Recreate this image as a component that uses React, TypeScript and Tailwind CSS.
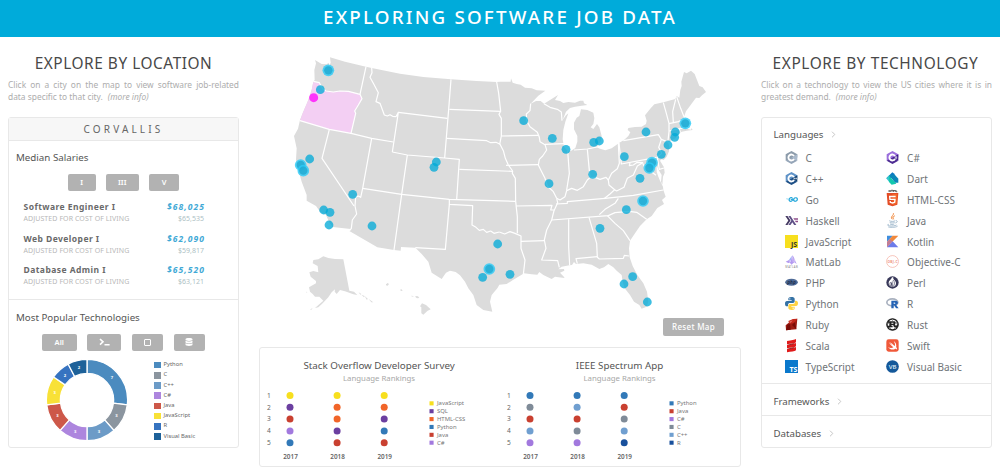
import React from "react";
import { SiHaskell, SiRust, SiGo } from "react-icons/si";
import { FaDatabase } from "react-icons/fa";

/* ---------- map data ---------- */

const shift = (dx: number, dy: number, pts: string) =>
  pts
    .trim()
    .split(/\s+/)
    .map((p) => {
      const [x, y] = p.split(",").map(Number);
      return `${x + dx},${y + dy}`;
    })
    .join(" ");

const COUNTRY = [
  shift(0, 0, "75,30 95,42 110,43 116,38 118,48 122,38 120,22 165,35 228,50 245,54 330,71 400,81 483,88 560,93 620,96"),
  shift(630, 0, "0,95 32,95 33,85 38,98 50,102 62,104 75,113 95,115 110,121 136,122 115,137 92,161 108,153 122,153 132,161 150,150 174,135 165,150 180,153 190,159 205,156 225,158 240,152 250,152 252,160 262,165 245,167 225,170 210,174 198,185 190,205 186,212 198,196 205,190 196,215 190,240 188,268 192,290 203,303 214,302 226,294 232,275 232,258 222,238 222,218 230,203 238,198 243,178 262,180 280,188 283,205 280,222 272,232 280,237 291,222 298,232 305,258 303,272 290,292 300,296 316,301 335,295 357,279 372,270 385,258 391,247 383,240 385,234 405,231 425,230 438,222 440,212 435,196 452,175 463,163 490,157 526,147 530,138 538,143 541,120 545,108 544,95 552,66 560,70 573,62 584,72 598,108 608,112 618,126 606,136 598,144 588,143 572,165 558,184 552,200 549,210 555,224 560,236 573,239 574,234 578,240 560,242 545,245 533,254 528,264 516,270 504,276 508,290 507,304 500,320 491,330 485,328 480,332 492,352 494,368 489,380 487,404 483,395 485,375 476,360 470,345 470,365 475,380 480,392 489,410"),
  shift(630, 390, "490,30 497,50 486,60 492,72 472,84 455,108 440,118 420,138 402,164 390,182 387,205 389,232 398,258 412,285 430,310 441,335 445,365 440,380 425,386 418,375 402,365 390,345 374,325 368,305 365,285 350,272 340,262 325,252 312,262 298,267 275,254 250,250 228,252 222,246 216,255 208,256 185,260 175,268 192,267 193,272 180,278 195,294 165,290 155,297 130,285 118,276 112,284 95,283 72,280 60,287 40,299 20,312 -2,314"),
  shift(0, 390, "622,325 605,345 600,365 607,395 580,390 560,375 550,345 535,325 525,305 510,286 497,276 480,272 468,278 455,297 425,278 415,245 395,222 376,203 333,201 332,212 312,210 262,202 178,153 182,147 128,141 117,125 108,105 90,95 78,78 50,62 50,45 35,5"),
  shift(0, 0, "33,388 22,350 18,330 20,295 12,258 24,236 30,210 38,190 55,150 65,120 70,95 74,90 73,60 78,40"),
].join(" ");

const OREGON = "70,96 88,98 98,116 108,123 130,126 150,123 175,124 190,128 210,133 216,146 205,165 194,183 197,190 183,250 118,238 30,212 38,190 55,150 65,120";

const BORDERS = [
  shift(0, 0, "70,94 88,98 98,116 108,123 130,126 150,123 175,124 190,128 210,133 216,146 205,165 194,183 197,190 183,250"),
  shift(0, 0, "228,50 210,133"),
  shift(0, 0, "30,212 118,238 183,250 245,265 310,276"),
  shift(0, 0, "118,238 96,325 192,468"),
  shift(0, 0, "245,265 218,415 212,442 205,438 197,442 195,468 200,492 187,510 184,535 178,543"),
  shift(0, 0, "218,415 335,433 478,448 675,454"),
  shift(0, 0, "307,306 352,315 464,324 508,328 500,449"),
  shift(0, 0, "352,315 335,433 312,600"),
  shift(0, 0, "245,54 246,68 240,82 250,100 265,128 258,155 270,160 283,195 292,198 300,194 308,199 318,200 325,187 307,306"),
  shift(0, 0, "325,187 472,205"),
  shift(0, 0, "483,88 476,178 464,324"),
  shift(0, 0, "478,178 632,184"),
  shift(0, 0, "470,265 590,272 602,278 618,277 630,283 640,302 646,325 655,345 668,363"),
  shift(0, 0, "508,358 668,364"),
  shift(0, 0, "620,96 626,130 632,184 627,193 634,205 634,258 629,283"),
  shift(0, 0, "634,258 745,256"),
  shift(0, 0, "648,346 744,344"),
  shift(0, 0, "668,363 667,370 676,385 677,454 682,500 682,550"),
  shift(0, 0, "478,448 478,463 548,467 546,525 558,532 568,541 580,538 590,547 602,543 612,550 628,546"),
  shift(630, 390, "-2,156 14,162 30,155 45,160 63,168 63,205 75,240 70,283"),
  shift(0, 0, "478,463 466,598 376,593"),
  shift(630, 0, "92,161 90,182 79,192 80,212 90,230 112,247 118,262 120,275 135,284 140,300 128,318 118,328 115,345 125,365 135,385 142,408 160,425 170,445"),
  shift(630, 390, "170,55 173,68 162,92 155,120 140,150 133,180 138,205 125,240 173,242 178,262"),
  shift(630, 0, "135,283 192,281"),
  shift(630, 0, "132,161 150,172 172,178 184,186 186,212"),
  shift(630, 0, "203,303 208,370 204,395 200,420"),
  shift(630, 0, "170,445 180,450 195,440 200,422 215,415 232,421 250,410 262,390 270,383 285,382 300,388 318,382 325,390 335,370 352,356 358,340 355,279"),
  shift(630, 0, "357,279 364,342 470,322"),
  shift(630, 0, "262,298 270,383"),
  shift(630, 0, "222,300 262,297 292,291"),
  shift(630, 0, "370,272 475,254 484,268 504,276"),
  shift(630, 0, "484,268 476,292 485,310 472,322 478,358 492,354"),
  shift(630, 0, "490,158 499,190 507,220 507,245 504,272"),
  shift(630, 0, "527,148 518,185 520,217"),
  shift(630, 0, "530,140 542,175 552,200"),
  shift(630, 0, "507,221 535,215 549,209"),
  shift(630, 0, "507,243 538,236 556,233"),
  shift(630, 0, "538,236 541,248"),
  shift(630, 0, "325,390 327,405 345,420 350,423 372,412 382,385 400,375 412,348 428,338 412,337 400,345 388,347 390,338"),
  shift(630, 0, "428,340 436,355 450,362 468,376"),
  shift(630, 0, "345,418 330,432 312,446"),
  shift(630, 390, "168,72 202,70 202,65 315,55 400,46 490,30"),
  shift(630, 390, "155,120 325,107 345,98 388,94 410,97 440,118"),
  shift(630, 390, "355,55 345,70 315,88 298,104"),
  shift(630, 390, "322,107 345,130 370,152 390,182"),
  shift(630, 390, "267,112 290,190 292,232 298,237 370,235 373,226 387,228"),
  shift(630, 390, "292,230 228,236 232,251"),
  shift(630, 390, "206,118 206,200 209,256"),
  shift(630, 390, "48,78 156,76 152,90 163,90"),
  shift(630, 390, "63,184 133,182"),
];

const ALASKA = "70,240 85,238 100,229 115,234 135,237 160,238 178,332 192,335 202,345 190,343 165,334 150,330 140,342 134,335 135,328 125,337 115,352 98,370 85,382 75,384 100,362 88,350 75,350 68,342 60,335 57,322 78,310 78,303 62,290 58,277 70,273 85,277 83,258 68,250";

const HUBS = [[115, 61], [32, 345], [40, 362], [598, 657], [1186, 220], [1086, 338], [1078, 354], [1059, 453]];
const CITIES = [
  [91, 119], [59, 327], [439, 336], [432, 352], [188, 433], [101, 480], [120, 487], [117, 525], [246, 528],
  [623, 582], [578, 682], [660, 673], [701, 212], [787, 265], [828, 298], [911, 277], [928, 273], [908, 373],
  [777, 401], [1003, 320], [1068, 246], [1156, 246], [1154, 262], [1134, 285], [1114, 313], [1050, 385],
  [1009, 479], [930, 535], [1028, 680], [1002, 702], [1072, 756],
];

function UsMap() {
  return (
    <svg viewBox="-153 -39 1566 930" className="block h-[310px] w-[522px]">
      <polygon points={COUNTRY} fill="#dcdcdc" />
      <polygon points={OREGON} fill="#f3cff3" />
      <g fill="none" stroke="#fff" strokeWidth="3.6" strokeLinejoin="round">
        {BORDERS.map((b, i) => (
          <polyline key={i} points={b} />
        ))}
      </g>
      <g transform="translate(0 390)" fill="#dcdcdc">
        <polygon points={ALASKA} />
        <path d="M206 337l8 5-3 2zM214 344l10 4-2 4zM224 348l10 9-4 2zM236 357l14 10-6 0zM60 388l8-3-4 4zM49 335l3 1-2 3z" />
        <path d="M288 313l5-4 4 3-4 5-5-1zM330 329l5-1 3 4-5 1zM364 347l6 1v2l-6-1zM376 348l8 1 4 5-7 1-4-3zM396 370l12 5 14 13-10 5-12 11-6-4 0-18-4-3z" />
      </g>
      {HUBS.map(([x, y]) => (
        <g key={`${x}-${y}`}>
          <circle cx={x} cy={y} r="17.5" fill="#2ccbf7" opacity=".82" />
          <circle cx={x} cy={y} r="12.5" fill="#1fa6cd" opacity=".75" />
        </g>
      ))}
      {CITIES.map(([x, y]) => (
        <circle key={`${x}-${y}`} cx={x} cy={y} r="13.2" fill="#00a9d8" opacity=".76" />
      ))}
      <circle cx="71" cy="143" r="13.5" fill="#fd34fb" />
    </svg>
  );
}

/* ---------- left column ---------- */

const SLICES: [string, number, string][] = [
  ["Python", 7, "#4b8bbf"],
  ["C", 3, "#8b959f"],
  ["C++", 3, "#6c9bc7"],
  ["C#", 3, "#ad86de"],
  ["Java", 3, "#cd5849"],
  ["JavaScript", 3, "#f8e137"],
  ["R", 2, "#3673c0"],
  ["Visual Basic", 2, "#1d6199"],
];

function Donut() {
  const total = 26;
  let acc = 0;
  const pt = (r: number, a: number) => `${(r * Math.sin(a)).toFixed(2)} ${(-r * Math.cos(a)).toFixed(2)}`;
  return (
    <svg viewBox="-41 -41 82 82" className="block size-[82px] shrink-0">
      {SLICES.map(([name, n, color]) => {
        const a0 = (acc / total) * 2 * Math.PI;
        acc += n;
        const a1 = (acc / total) * 2 * Math.PI;
        const m = (a0 + a1) / 2;
        return (
          <g key={name}>
            <path
              d={`M${pt(40.6, a0)}A40.6 40.6 0 0 1 ${pt(40.6, a1)}L${pt(26.6, a1)}A26.6 26.6 0 0 0 ${pt(26.6, a0)}Z`}
              fill={color}
              stroke="#fff"
              strokeWidth="1.3"
            />
            <text x={33.4 * Math.sin(m)} y={-33.4 * Math.cos(m) + 1.5} textAnchor="middle" fill="#fff" fontSize="4.2" fontWeight="700">
              {n}
            </text>
          </g>
        );
      })}
    </svg>
  );
}

const SALARIES = [
  ["Software Engineer I", "$68,025", "$65,535"],
  ["Web Developer I", "$62,090", "$59,817"],
  ["Database Admin I", "$65,520", "$63,121"],
];

const BTN = "flex items-center justify-center rounded-[2px] bg-[#b2b2b2] font-semibold text-white";

function LocationPanel() {
  return (
    <section className="w-[231px] shrink-0">
      <h2 className="mt-[17.6px] h-[18px] text-center text-[15.4px] leading-[18px] tracking-[0.55px] whitespace-nowrap text-[#484848]">EXPLORE BY LOCATION</h2>
      <div className="mt-[6.9px] text-[8.4px] leading-[11.6px] text-[#adadad]">
        <p className="text-justify [text-align-last:justify]">Click on a city on the map to view software job-related</p>
        <p className="flex gap-[5px]">
          <span>data specific to that city.</span>
          <i>(more info)</i>
        </p>
      </div>
      <div className="mt-[14px] h-[331.5px] rounded-[3px] border border-[#e8e8e8]">
        <h3 className="flex h-[23px] items-center justify-center border-b border-[#e8e8e8] bg-[#f7f7f7] pt-[2px] text-[10px] tracking-[3.15px] text-[#666]">CORVALLIS</h3>
        <h4 className="mt-[10.5px] ml-[7px] h-[14px] text-[9.75px] leading-[14px] text-[#555]">Median Salaries</h4>
        <div className="mt-[9px] ml-[59px] flex h-[17px] gap-[10.5px] text-[7.5px]">
          <button className={`${BTN} w-[27.5px]`}>I</button>
          <button className={`${BTN} w-[32.5px]`}>III</button>
          <button className={`${BTN} w-[30px]`}>V</button>
        </div>
        <ul className="mt-[9.6px] ml-[14.5px] w-[180.5px]">
          {SALARIES.map(([job, pay, adj]) => (
            <li key={job} className="h-[31.8px]">
              <div className="flex justify-between text-[8.5px] leading-[12px] font-bold">
                <span className="tracking-[0.45px] text-[#6a6a6a]">{job}</span>
                <span className="-mr-px tracking-[1.05px] text-[#3fa9d6] italic">{pay}</span>
              </div>
              <div className="flex justify-between text-[7px] leading-[12px] text-[#b8b8b8]">
                <span className="tracking-[0.08px]">ADJUSTED FOR COST OF LIVING</span>
                <span className="text-[#aebfc4]">{adj}</span>
              </div>
            </li>
          ))}
        </ul>
        <div className="mt-[3.300px] border-t border-[#e8e8e8]" />
        <h4 className="mt-[10.5px] ml-[7px] h-[14px] text-[9.75px] leading-[14px] text-[#555]">Most Popular Technologies</h4>
        <div className="mt-[9px] ml-[33px] flex h-[17px] gap-[10.7px] text-[7.5px]">
          <button className={`${BTN} w-[34.5px]`}>All</button>
          <button className={`${BTN} w-[34px]`}>
            <svg viewBox="0 0 11 8" className="h-[8px] w-[11px]" fill="none" stroke="#fff" strokeWidth="1.6">
              <path d="M1 1l3 2.8-3 2.8M5.5 6.8H10.6" />
            </svg>
          </button>
          <button className={`${BTN} w-[31px]`}>
            <span className="size-[7px] rounded-[1px] border border-white" />
          </button>
          <button className={`${BTN} w-[31px]`}>
            <FaDatabase className="size-[8px]" />
          </button>
        </div>
        <div className="mt-[7.7px] ml-[37px] flex">
          <Donut />
          <ul className="mt-[1.4px] ml-[26px] text-[5.8px] text-[#666]">
            {SLICES.map(([name, , color]) => (
              <li key={name} className="flex h-[10.2px] items-center gap-[3px] leading-none">
                <span className="size-[6.5px]" style={{ backgroundColor: color }} />
                {name}
              </li>
            ))}
          </ul>
        </div>
      </div>
    </section>
  );
}

/* ---------- rankings ---------- */

const Y = "#f7df1e", P = "#6b3fa0", O = "#f16529", B = "#3279b8", R = "#c94030", V = "#a279de", G = "#7f8b98", L = "#709fd0", N = "#18509c";

type RankingProps = { title: string; columns: string[][]; legend: [string, string][] };

function Ranking({ title, columns, legend }: RankingProps) {
  return (
    <div className="w-[240.5px] shrink-0">
      <h3 className="mt-[11px] h-[14px] text-center text-[9.8px] leading-[14px] text-[#555]">{title}</h3>
      <p className="h-[11px] text-center text-[7.8px] leading-[11px] text-[#a8a8a8]">Language Rankings</p>
      <svg viewBox="0 383.6 240.5 78" className="block h-[78px] w-[240.5px]">
        <g fontSize="6.6" fill="#666" textAnchor="middle">
          {[1, 2, 3, 4, 5].map((n, i) => (
            <text key={n} x="9.8" y={397.5 + i * 11.8}>{n}</text>
          ))}
        </g>
        {columns.map((col, c) => (
          <g key={c}>
            {col.map((color, i) => (
              <circle key={i} cx={31 + c * 47.1} cy={395.1 + i * 11.8} r="3.5" fill={color} />
            ))}
            <text x={31.500 + c * 47.1} y="458.200" fontSize="6.4" fontWeight="600" fill="#666" textAnchor="middle">{2017 + c}</text>
          </g>
        ))}
        {legend.map(([name, color], i) => (
          <g key={name}>
            <rect x="170.500" y={400.9 + i * 7.87} width="4.1" height="4.1" fill={color} />
            <text x="178" y={405.1 + i * 7.87} fontSize="5.9" fill="#777">{name}</text>
          </g>
        ))}
      </svg>
    </div>
  );
}

/* ---------- technology icons (39-unit grid) ---------- */

const Hex = ({ light, mid, dark, plus }: { light: string; mid: string; dark: string; plus?: string }) => (
  <>
    <path d="M19.5 0L37 9.7V19.5L2 29.3V9.7z" fill={light} />
    <path d="M37 9.7V29.3L19.5 20z" fill={mid} />
    <path d="M2 29.3L19.5 19.5 37 29.3 19.5 39z" fill={dark} />
    <path d="M27 15A9 9 0 1 0 27 24" fill="none" stroke="#fff" strokeWidth="5.4" />
    {plus && <path d={plus} fill="none" stroke="#fff" strokeWidth="1.6" />}
  </>
);

const ICONS: Record<string, React.ReactNode> = {
  C: <Hex light="#8d9cab" mid="#a9b9cb" dark="#95a5b8" />,
  "C#": <Hex light="#9b6fdc" mid="#3a1788" dark="#4c2a92" plus="M28 16v7M32 16v7M26.500 18h7M26.500 21.500h7" />,
  "C++": <Hex light="#5f93c8" mid="#13406f" dark="#1d4f86" plus="M28 16.500v6M25.500 19.500h5M33.500 16.500v6M31 19.500h5" />,
  Dart: (
    <>
      <path d="M1 19L19 1l8 6-16 18z" fill="#0b79c0" />
      <path d="M9 9h18l10 11v12H27z" fill="#0b86b8" />
      <path d="M1 19L10 9v22z" fill="#35c5cf" />
      <path d="M9 11L31 35 17 38 9 30z" fill="#12c8ae" />
    </>
  ),
  Go: <SiGo x={0} y={0} size={39} color="#2aaadc" />,
  "HTML-CSS": (
    <>
      <path d="M9-9v6M13-9v6M9-6h4M15-8.200h6M18-9v6M22.500-3v-6l2.500 3L27.500-9v6M30-9v5.200h4" stroke="#222" strokeWidth="1.800" fill="none" />
      <path d="M2 0H37L34 35 19.500 40 5 35z" fill="#e44d26" />
      <path d="M19.500 3H34L31.500 33 19.500 37z" fill="#f16529" />
      <path d="M29 10.500H11l.8 8.500H27l-1 9-6.500 2-6.500-2-.4-4" fill="none" stroke="#fff" strokeWidth="4" />
    </>
  ),
  Haskell: (
    <>
      <path d="M1 6l9 13.500L1 33h6.500l9-13.500L7.500 6z" fill="#453a62" />
      <path d="M10 6l9 13.500L10 33h6.500l5.500-8.500L27.500 33H34L16.500 6z" fill="#5e5086" />
      <path d="M25 13h14v4.500H28zM29.500 20.500H39V25h-6.500z" fill="#8f4e8b" />
    </>
  ),
  Java: (
    <>
      <path d="M22-3c4 6-9 10-3 19-9-7 5-12 3-19zM27 5c-8 4-5 6-4 11 0-2-8-6 4-11z" fill="#ee8130" stroke="#ee8130" strokeWidth="1.300" />
      <path d="M10 20c4 3 14 3 18 0M30 20c6 0 4 6-2 7M11 25c4 2.500 11 2.500 15 0M12 30c4 2 9 2 13 0M8 31c-12 4 12 8 24 2M7 39c10 2 25 1 28-3" fill="none" stroke="#86a6bf" strokeWidth="2.200" />
    </>
  ),
  JavaScript: (
    <>
      <rect width="39" height="39" fill="#f7df1e" />
      <text x="36.500" y="36" fontSize="21" fontWeight="700" textAnchor="end" fill="#333">JS</text>
    </>
  ),
  Kotlin: (
    <>
      <path d="M3 2H20L3 20z" fill="#3f8ede" />
      <path d="M20 2H37L3 37V20z" fill="#f0883c" />
      <path d="M3 37L20 19 37 37z" fill="#6c7bea" />
      <path d="M3 37V20l8-8 9 7z" fill="#a276d0" opacity=".6" />
    </>
  ),
  MatLab: (
    <>
      <path d="M2 20l10-5L23 1l4 7 8 19-7-5-9 7-4-6-5 1z" fill="#b49af0" />
      <path d="M12 15l5 3-3 4 9-21-6 7zM22 6l3 15M27 10l3 12" fill="#7ba0f5" stroke="#f4f0ff" strokeWidth="1.300" />
      <text x="19.500" y="38" fontSize="8" textAnchor="middle" fill="#888" textLength="37">MATLAB</text>
    </>
  ),
  "Objective-C": (
    <>
      <circle cx="19.500" cy="19.500" r="17.800" fill="none" stroke="#f2a091" strokeWidth="1.800" />
      <text x="19.500" y="23" fontSize="9.500" fontWeight="700" textAnchor="middle" fill="#ee8e7d" textLength="30">OBJ-C</text>
    </>
  ),
  PHP: (
    <>
      <ellipse cx="19.500" cy="18.500" rx="19" ry="10.500" fill="#4f6a96" />
      <text x="19.500" y="23" fontSize="14" fontWeight="700" fontStyle="italic" textAnchor="middle" fill="#20304f">php</text>
    </>
  ),
  Perl: (
    <>
      <circle cx="19.500" cy="19.500" r="18.500" fill="#39395a" />
      <path d="M18 4c-2 7-10 9-10 18 0 6 4 9 9 11l-2-10 4-9 1 19c7-1 10-5 10-11C30 13 20 12 22 4z" fill="#fff" />
      <path d="M21 12c6 5 5 14 1 20M14 18c-3 4-3 8 0 12" fill="none" stroke="#39395a" strokeWidth="2" />
    </>
  ),
  Python: (
    <>
      <path d="M19 0C11 0 10 3 10 6v4h10v2H6c-4 0-6 3-6 8s2 8 6 8h3v-5c0-3 3-5 6-5h9c3 0 5-2 5-5V6c0-4-4-6-10-6z" fill="#3572a5" />
      <path d="M20 39c8 0 9-3 9-6v-4H19v-2h14c4 0 6-3 6-8s-2-8-6-8h-3v5c0 3-3 5-6 5h-9c-3 0-5 2-5 5v7c0 4 4 6 10 6z" fill="#ffd343" />
      <circle cx="14.500" cy="5.500" r="2" fill="#fff" />
      <circle cx="24.500" cy="33.500" r="2" fill="#fff" />
    </>
  ),
  R: (
    <>
      <ellipse cx="19" cy="16" rx="16.500" ry="10.500" fill="none" stroke="#a9b1bf" strokeWidth="5" />
      <path fillRule="evenodd" d="M16 34V11h12c10 0 10 11 2 12l8 11h-8l-6-10h-1v10zM23 16.500v4c7 .5 7-4.500 0-4z" fill="#2463b5" />
    </>
  ),
  Ruby: (
    <>
      <path d="M2 22L22 5 37 2 34 34 3 37z" fill="#a01c12" />
      <path d="M10 9L24 3l13-1-8 11-15 5z" fill="#c5281c" />
      <path d="M3 37l4-17 8-2 2 17zM29 13l5 21-13-13z" fill="#790c08" />
      <path d="M12 12l11-5-6 7z" fill="#e57a72" />
    </>
  ),
  Rust: <SiRust size={39} color="#222" />,
  Scala: (
    <>
      <path d="M6 6C20 3 29 3 33 0v10c-4 4-15 4-27 6zM6 18c14-3 23-3 27-6v10c-4 4-15 4-27 6zM6 30c14-3 23-3 27-6v10c-4 4-15 4-27 6z" fill="#e01b1b" />
      <path d="M6 16c10-2 20-2 25-5l-7 5C18 18 12 17 6 16zM6 28c10-2 20-2 25-5l-7 5c-6 2-12 1-18 0z" fill="#7d0c0c" />
    </>
  ),
  Swift: (
    <>
      <rect x="1" y="1" width="37" height="37" rx="7" fill="#f0593a" />
      <path d="M23 6c7 5 9 12 7.500 18 3 4 3 6 2.500 8-2-3-4-3-6-2-7 4-16 1-21-6 6 4 12 4 16 1C16 20 11 14 8 9c4 4 8 7 12 10-3-3-6-7-8-10 5 4 10 9 15 12 1-5-1-10-4-15z" fill="#fff" />
    </>
  ),
  TypeScript: (
    <>
      <rect width="39" height="39" fill="#0a78cc" />
      <text x="37" y="36" fontSize="21" fontWeight="700" textAnchor="end" fill="#fff">TS</text>
    </>
  ),
  "Visual Basic": (
    <>
      <circle cx="19.500" cy="19.500" r="19" fill="#14589a" />
      <text x="19.500" y="26" fontSize="18" fontWeight="600" textAnchor="middle" fill="#d3e4f4">VB</text>
    </>
  ),
};

const LANGS = [
  "C", "C#", "C++", "Dart", "Go", "HTML-CSS", "Haskell", "Java", "JavaScript", "Kotlin", "MatLab",
  "Objective-C", "PHP", "Perl", "Python", "R", "Ruby", "Rust", "Scala", "Swift", "TypeScript", "Visual Basic",
];

const Heading = ({ children }: { children: string }) => (
  <h3 className="flex items-center gap-[7.5px] pl-[12px] text-[9.7px] leading-[14px] text-[#555]">
    {children}
    <svg viewBox="0 0 5 8" className="h-[7px] w-[5px]" fill="none" stroke="#c4c4c4" strokeWidth="1.1">
      <path d="M.8.8L4 4 .8 7.200" />
    </svg>
  </h3>
);

function TechnologyPanel() {
  return (
    <section className="w-[231px] shrink-0">
      <h2 className="mt-[17.6px] h-[18px] pr-[2px] text-center text-[15.4px] leading-[18px] tracking-[0.6px] whitespace-nowrap text-[#484848]">EXPLORE BY TECHNOLOGY</h2>
      <div className="mt-[6.9px] text-[8.4px] leading-[11.6px] text-[#adadad]">
        <p className="text-justify [text-align-last:justify]">Click on a technology to view the US cities where it is in</p>
        <p className="flex gap-[5px]">
          <span>greatest demand.</span>
          <i>(more info)</i>
        </p>
      </div>
      <div className="mt-[14px] -ml-[0.5px] flex h-[331.5px] flex-col rounded-[3px] border border-[#e8e8e8]">
        <div className="h-[266.8px] pt-[10px]">
          <Heading>Languages</Heading>
          <ul className="mt-[5.2px] ml-[23.3px] grid grid-cols-[101.500px_1fr]">
            {LANGS.map((name) => (
              <li key={name} className="flex h-[20.93px] items-center text-[10px] leading-none text-[#6f7478]">
                <svg viewBox="0 0 39 39" className="mr-[7.8px] size-[13px] shrink-0 overflow-visible">{ICONS[name]}</svg>
                <span className="relative top-[0.5px]">{name}</span>
              </li>
            ))}
          </ul>
        </div>
        <div className="flex h-[32px] items-center border-t border-[#e8e8e8] pt-[4px]">
          <Heading>Frameworks</Heading>
        </div>
        <div className="flex h-[32px] items-center border-t border-[#e8e8e8] pt-[4px]">
          <Heading>Databases</Heading>
        </div>
      </div>
    </section>
  );
}

export default function App() {
  return (
    <div className="h-[476px] w-[1000px] overflow-hidden bg-white font-['Noto_Sans','Open_Sans',sans-serif]">
      <header className="flex h-[37px] items-center justify-center bg-[#00abda] pb-[3px] text-[18.8px] leading-none font-medium tracking-[2.2px] text-white">
        EXPLORING SOFTWARE JOB DATA
      </header>
      <main className="flex pl-[8px]">
        <LocationPanel />
        <div className="relative w-[522px] shrink-0">
          <UsMap />
          <button className="absolute top-[281px] left-[424px] h-[17.500px] w-[61px] rounded-[2px] bg-[#b2b2b2] text-[8px] font-medium tracking-[0.3px] text-white">
            Reset Map
          </button>
          <div className="ml-[20px] h-[120px] w-[482px] rounded-[3px] border border-[#e8e8e8]">
            <div className="-ml-[1.2px] flex">
              <Ranking
                title="Stack Overflow Developer Survey"
                columns={[[Y, P, R, V, B], [Y, O, O, P, R], [Y, O, P, B, R]]}
                legend={[["JavaScript", Y], ["SQL", P], ["HTML-CSS", O], ["Python", B], ["Java", R], ["C#", V]]}
              />
              <Ranking
                title="IEEE Spectrum App"
                columns={[[B, G, R, L, V], [B, L, R, G, V], [B, R, G, L, N]]}
                legend={[["Python", B], ["Java", R], ["C#", V], ["C", G], ["C++", L], ["R", N]]}
              />
            </div>
          </div>
        </div>
        <TechnologyPanel />
      </main>
    </div>
  );
}
